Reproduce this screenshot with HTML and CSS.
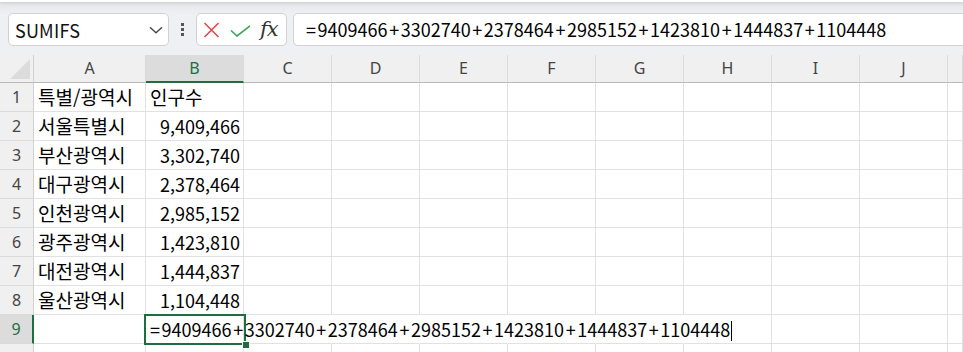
FILE: index.html
```html
<!DOCTYPE html>
<html lang="ko">
<head>
<meta charset="utf-8">
<title>Sheet</title>
<link rel="stylesheet" href="styles.css">
</head>
<body>
<div class="topedge"></div>
<div class="toolbar">
  <div class="namebox">
    <span class="namebox-text">SUMIFS</span>
    <svg class="chevron" width="14" height="8" viewBox="0 0 14 8"><path d="M1 1.2 L7 6.8 L13 1.2" fill="none" stroke="#444" stroke-width="1.3"/></svg>
  </div>
  <div class="grip"><span></span><span></span><span></span></div>
  <div class="fxbox">
    <svg class="icon" width="17" height="16" viewBox="0 0 17 16"><path d="M1.5 1 L15.5 15 M15.5 1 L1.5 15" stroke="#e5484d" stroke-width="1.6" fill="none"/></svg>
    <svg class="icon" width="21" height="12" viewBox="0 0 21 12"><path d="M1 5.5 L7 11 L20 0.8" stroke="#3aa655" stroke-width="1.6" fill="none"/></svg>
    <span class="fx">fx</span>
  </div>
  <div class="formula"><span class="op">=</span>9409466<span class="op">+</span>3302740<span class="op">+</span>2378464<span class="op">+</span>2985152<span class="op">+</span>1423810<span class="op">+</span>1444837<span class="op">+</span>1104448</div>
</div>
<div class="sheet">
  <div class="corner"><span class="tri"></span></div>
  <div class="colhdr">A</div>
  <div class="colhdr sel">B</div>
  <div class="colhdr">C</div>
  <div class="colhdr">D</div>
  <div class="colhdr">E</div>
  <div class="colhdr">F</div>
  <div class="colhdr">G</div>
  <div class="colhdr">H</div>
  <div class="colhdr">I</div>
  <div class="colhdr">J</div>
  <div class="colhdr"></div>

  <div class="rowhdr">1</div><div class="cell ko">특별/광역시</div><div class="cell ko">인구수</div><div class="cell"></div><div class="cell"></div><div class="cell"></div><div class="cell"></div><div class="cell"></div><div class="cell"></div><div class="cell"></div><div class="cell"></div><div class="cell"></div>
  <div class="rowhdr">2</div><div class="cell ko">서울특별시</div><div class="cell num">9,409,466</div><div class="cell"></div><div class="cell"></div><div class="cell"></div><div class="cell"></div><div class="cell"></div><div class="cell"></div><div class="cell"></div><div class="cell"></div><div class="cell"></div>
  <div class="rowhdr">3</div><div class="cell ko">부산광역시</div><div class="cell num">3,302,740</div><div class="cell"></div><div class="cell"></div><div class="cell"></div><div class="cell"></div><div class="cell"></div><div class="cell"></div><div class="cell"></div><div class="cell"></div><div class="cell"></div>
  <div class="rowhdr">4</div><div class="cell ko">대구광역시</div><div class="cell num">2,378,464</div><div class="cell"></div><div class="cell"></div><div class="cell"></div><div class="cell"></div><div class="cell"></div><div class="cell"></div><div class="cell"></div><div class="cell"></div><div class="cell"></div>
  <div class="rowhdr">5</div><div class="cell ko">인천광역시</div><div class="cell num">2,985,152</div><div class="cell"></div><div class="cell"></div><div class="cell"></div><div class="cell"></div><div class="cell"></div><div class="cell"></div><div class="cell"></div><div class="cell"></div><div class="cell"></div>
  <div class="rowhdr">6</div><div class="cell ko">광주광역시</div><div class="cell num">1,423,810</div><div class="cell"></div><div class="cell"></div><div class="cell"></div><div class="cell"></div><div class="cell"></div><div class="cell"></div><div class="cell"></div><div class="cell"></div><div class="cell"></div>
  <div class="rowhdr">7</div><div class="cell ko">대전광역시</div><div class="cell num">1,444,837</div><div class="cell"></div><div class="cell"></div><div class="cell"></div><div class="cell"></div><div class="cell"></div><div class="cell"></div><div class="cell"></div><div class="cell"></div><div class="cell"></div>
  <div class="rowhdr">8</div><div class="cell ko">울산광역시</div><div class="cell num">1,104,448</div><div class="cell"></div><div class="cell"></div><div class="cell"></div><div class="cell"></div><div class="cell"></div><div class="cell"></div><div class="cell"></div><div class="cell"></div><div class="cell"></div>
  <div class="rowhdr sel">9</div><div class="cell"></div><div class="cell active"><span class="activebox"></span><span class="handle"></span><div class="editor"><span class="op">=</span>9409466<span class="op">+</span>3302740<span class="op">+</span>2378464<span class="op">+</span>2985152<span class="op">+</span>1423810<span class="op">+</span>1444837<span class="op">+</span>1104448<span class="caret"></span></div></div><div class="cell spill"></div><div class="cell spill"></div><div class="cell spill"></div><div class="cell spill"></div><div class="cell spill"></div><div class="cell"></div><div class="cell"></div><div class="cell"></div><div class="cell"></div>
  <div class="rowhdr"></div><div class="cell"></div><div class="cell"></div><div class="cell"></div><div class="cell"></div><div class="cell"></div><div class="cell"></div><div class="cell"></div><div class="cell"></div><div class="cell"></div><div class="cell"></div><div class="cell"></div>
</div>
</body>
</html>
```

FILE: styles.css
```css
html, body {
  margin: 0;
  padding: 0;
}
body {
  width: 963px;
  height: 352px;
  overflow: hidden;
  background: #eef0f3;
  font-family: "Noto Sans CJK KR", "Noto Sans", sans-serif;
  color: #000;
}
.topedge {
  position: relative;
  z-index: 1;
  height: 2px;
  background: #fff;
  box-shadow: 0 1px 3px rgba(0, 0, 0, 0.14);
}
.toolbar {
  display: flex;
  align-items: flex-start;
  height: 53px;
  box-sizing: border-box;
  padding-top: 11px;
  background: linear-gradient(#e3e5e8 0, #eceef1 9px, #eef0f3 14px);
}
.namebox {
  margin-left: 8px;
  width: 161px;
  height: 33px;
  box-sizing: border-box;
  background: #fff;
  border: 1px solid #d2d2d2;
  border-radius: 5px;
  display: flex;
  align-items: center;
  justify-content: space-between;
  padding: 0 5px 0 6px;
}
.namebox-text {
  font-size: 18px;
  line-height: 1;
  letter-spacing: 0.2px;
  color: #111;
}
.chevron {
  display: block;
}
.grip {
  width: 27px;
  height: 33px;
  display: flex;
  flex-direction: column;
  align-items: center;
  justify-content: center;
  gap: 2px;
}
.grip span {
  width: 3px;
  height: 3px;
  background: #555;
}
.fxbox {
  width: 91px;
  height: 33px;
  box-sizing: border-box;
  background: #fff;
  border: 1px solid #d2d2d2;
  border-radius: 5px;
  display: flex;
  align-items: center;
  padding-left: 6px;
  gap: 10px;
}
.icon {
  display: block;
}
.icon + .icon {
  margin-top: 3px;
}
.fx {
  font-family: "DejaVu Serif", "Liberation Serif", serif;
  font-style: italic;
  font-size: 21px;
  line-height: 1;
  color: #333;
  margin-left: -1px;
  letter-spacing: -1px;
}
.formula {
  flex: 1;
  margin-left: 6px;
  margin-right: -20px;
  height: 33px;
  box-sizing: border-box;
  background: #fff;
  border: 1px solid #d2d2d2;
  border-radius: 5px;
  padding-left: 12px;
  font-size: 18px;
  line-height: 31px;
  white-space: nowrap;
  overflow: hidden;
}
.op {
  margin: 0 1.6px;
}
.op:first-child {
  margin-left: 0;
}
.sheet {
  display: grid;
  grid-template-columns: 34px 112px 98px repeat(8, 88px) 1fr;
  grid-template-rows: 28px;
  grid-auto-rows: 29px;
  background: #fff;
}
.sheet > div {
  box-sizing: border-box;
  border-right: 1px solid #e1e1e1;
  border-bottom: 1px solid #e1e1e1;
  min-width: 0;
}
.sheet > .spill {
  border-right-color: #fff;
}
.corner {
  background: #f0f0f0;
  border-right-color: #d0d0d0 !important;
  border-bottom: 1px solid #b8b8b8 !important;
  display: flex;
  justify-content: flex-end;
  align-items: flex-end;
  padding: 0 3px 3px 0;
}
.tri {
  width: 0;
  height: 0;
  border-left: 20px solid transparent;
  border-bottom: 20px solid #dcdcdc;
}
.colhdr {
  background: #f0f0f0;
  border-right-color: #dadada !important;
  border-bottom: 1px solid #b8b8b8 !important;
  font-family: "Noto Sans", sans-serif;
  font-size: 16px;
  color: #444;
  text-align: center;
  line-height: 27px;
}
.colhdr.sel {
  background: #dcdcdc;
  color: #1e6e42;
  border-bottom: 2px solid #1e6e42 !important;
  line-height: 26px;
}
.rowhdr {
  background: #f0f0f0;
  border-right-color: #d0d0d0 !important;
  border-bottom-color: #dadada !important;
  font-family: "Noto Sans", sans-serif;
  font-size: 16px;
  color: #444;
  text-align: center;
  line-height: 28px;
}
.rowhdr.sel {
  background: #dcdcdc;
  color: #1e6e42;
  border-right: 2px solid #1e6e42 !important;
}
.cell {
  font-size: 18px;
  line-height: 28px;
  padding: 0 4px;
  white-space: nowrap;
}
.cell.ko {
  font-size: 19px;
}
.cell.num {
  text-align: right;
  padding-right: 3px;
}
.cell.active {
  position: relative;
  z-index: 2;
  padding: 0;
  overflow: visible;
}
.editor {
  position: relative;
  z-index: 5;
  display: inline-block;
  height: 28px;
  padding-left: 4px;
  padding-right: 1px;
  line-height: 28px;
}
.caret {
  display: inline-block;
  width: 1px;
  height: 20px;
  background: #000;
  vertical-align: -4px;
  margin-left: 1px;
}
.activebox {
  position: absolute;
  z-index: 3;
  left: -2px;
  top: -1px;
  width: 102px;
  height: 31px;
  box-sizing: border-box;
  border: 2px solid #1e6e42;
}
.handle {
  position: absolute;
  z-index: 4;
  left: 96px;
  top: 26px;
  width: 6px;
  height: 6px;
  background: #1e6e42;
  border: 1px solid #fff;
}
```
